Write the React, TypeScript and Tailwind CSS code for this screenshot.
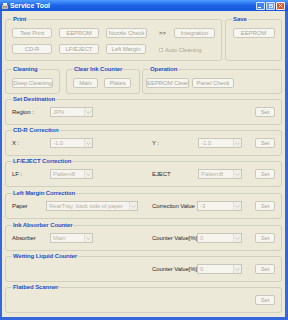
import type { ReactNode } from 'react';

function Btn({ children, className = '' }: { children: ReactNode; className?: string }) {
  return (
    <div
      className={`flex h-[10px] shrink-0 items-center justify-center whitespace-nowrap rounded-[2px] border border-[#cac8bb] bg-[#f6f5f0] text-[#aca899] ${className}`}
    >
      {children}
    </div>
  );
}

function Combo({ value, className = '' }: { value: string; className?: string }) {
  return (
    <div className={`flex h-[10px] shrink-0 items-center border border-[#c9c7ba] bg-[#f5f4ef] ${className}`}>
      <span className="flex-1 truncate whitespace-nowrap pl-[2px] text-[#b8b5a8]">{value}</span>
      <span className="flex h-full w-[8px] items-center justify-center border-l border-[#e0ded3] bg-[#efeee7]">
        <svg width="5" height="3" viewBox="0 0 5 3">
          <path d="M0.5 0.5 L2.5 2.5 L4.5 0.5" fill="none" stroke="#c2bfb2" strokeWidth="0.8" />
        </svg>
      </span>
    </div>
  );
}

function Group({ title, children, className = '' }: { title: string; children: ReactNode; className?: string }) {
  return (
    <fieldset className={`rounded-[3px] border border-[#d0d0bf] px-[6px] ${className}`}>
      <legend className="whitespace-nowrap px-[1px] text-[6px] font-bold leading-[8px] text-[#1d4fc6]">{title}</legend>
      {children}
    </fieldset>
  );
}

function Label({ children, className = '' }: { children: ReactNode; className?: string }) {
  return <span className={`shrink-0 whitespace-nowrap text-[#2b2b2b] ${className}`}>{children}</span>;
}

export default function App() {
  return (
    <div className='flex h-[320px] w-[288px] flex-col overflow-hidden font-["Liberation_Sans",Arial,sans-serif] text-[6px] leading-[8px] tracking-[-0.1px]'>
      {/* title bar */}
      <div className="flex h-[11px] shrink-0 items-center bg-gradient-to-b from-[#4f9bff] via-[#1c63e6] to-[#1658dc] pl-[1px] pr-[3px]">
        <svg width="8" height="8" viewBox="0 0 8 8" className="mr-[1px]">
          <rect x="1" y="3" width="6" height="4" fill="#d9d4c4" stroke="#7a6f5a" strokeWidth="0.5" />
          <rect x="2" y="1" width="4" height="2.5" fill="#f3f1e8" />
          <rect x="2" y="4" width="1.5" height="1.5" fill="#3aa33a" />
          <rect x="4" y="4.5" width="2" height="1" fill="#d83b2a" />
        </svg>
        <span className="text-[7px] font-bold text-white">Service Tool</span>
        <div className="ml-auto flex gap-[1px]">
          <div className="flex h-[8px] w-[9px] items-end justify-start rounded-[1px] border border-white/80 bg-[#3f84f0] pb-[1px] pl-[1px]">
            <div className="h-[1px] w-[3px] bg-white" />
          </div>
          <div className="flex h-[8px] w-[9px] items-center justify-center rounded-[1px] border border-white/70 bg-[#6a9ef0]">
            <div className="h-[4px] w-[4px] border border-t-2 border-white/70" />
          </div>
          <div className="flex h-[8px] w-[9px] items-center justify-center rounded-[1px] border border-white/90 bg-[#e2542c]">
            <svg width="5" height="5" viewBox="0 0 5 5">
              <path d="M0.7 0.7 L4.3 4.3 M4.3 0.7 L0.7 4.3" stroke="white" strokeWidth="1" />
            </svg>
          </div>
        </div>
      </div>

      {/* window body */}
      <div className="flex flex-1 flex-col border-b-[3px] border-l-[2px] border-r-[3px] border-[#3467dc] bg-[#ece9d8] px-[3px] pt-[4px]">
        <div className="flex gap-[3px]">
          <Group title="Print" className="w-[217px] pb-[6px] pt-[5px]">
            <div className="flex items-center">
              <Btn className="w-[40px]">Test Print</Btn>
              <Btn className="ml-[7px] w-[40px]">EEPROM</Btn>
              <Btn className="ml-[7px] w-[41px]">Nozzle Check</Btn>
              <span className="ml-[12px] text-[#333]">&gt;&gt;</span>
              <Btn className="ml-[8px] w-[41px]">Integration</Btn>
            </div>
            <div className="mt-[5px] flex items-center">
              <Btn className="w-[40px]">CD-R</Btn>
              <Btn className="ml-[7px] w-[40px]">LF/EJECT</Btn>
              <Btn className="ml-[7px] w-[40px]">Left Margin</Btn>
              <div className="ml-[13px] mt-[3px] flex items-center gap-[2px]">
                <div className="h-[4px] w-[4px] border border-[#c9c7ba] bg-[#f5f4ef]" />
                <span className="whitespace-nowrap text-[#aca899]">Auto Cleaning</span>
              </div>
            </div>
          </Group>
          <Group title="Save" className="flex-1 pt-[5px]">
            <div className="flex justify-center">
              <Btn className="w-[42px]">EEPROM</Btn>
            </div>
          </Group>
        </div>

        <div className="mt-[4px] flex">
          <Group title="Cleaning" className="w-[52px] pb-[5px] pt-[5px]">
            <Btn className="w-[41px]">Deep Cleaning</Btn>
          </Group>
          <Group title="Clear Ink Counter" className="ml-[6px] w-[74px] pb-[5px] pt-[5px]">
            <div className="flex gap-[6px]">
              <Btn className="w-[25px]">Main</Btn>
              <Btn className="w-[27px]">Plates</Btn>
            </div>
          </Group>
          <Group title="Operation" className="ml-[2px] flex-1 pb-[5px] pt-[5px]">
            <div className="-ml-[3px] flex gap-[3px]">
              <Btn className="w-[43px]">EEPROM Clear</Btn>
              <Btn className="w-[42px]">Panel Check</Btn>
            </div>
          </Group>
        </div>

        <Group title="Set Destination" className="mt-[1px] pb-[7px] pt-[4px]">
          <div className="flex items-center">
            <Label className="w-[38px]">Region :</Label>
            <Combo value="JPN" className="w-[43px]" />
            <Btn className="ml-auto w-[20px]">Set</Btn>
          </div>
        </Group>

        <Group title="CD-R Correction" className="mt-[1px] pb-[7px] pt-[4px]">
          <div className="flex items-center">
            <Label className="w-[38px]">X :</Label>
            <Combo value="-1.0" className="w-[43px]" />
            <Label className="ml-[59px] w-[46px]">Y :</Label>
            <Combo value="-1.0" className="w-[44px]" />
            <Btn className="ml-auto w-[20px]">Set</Btn>
          </div>
        </Group>

        <Group title="LF/EJECT Correction" className="mt-[1px] pb-[7px] pt-[4px]">
          <div className="flex items-center">
            <Label className="w-[38px]">LF :</Label>
            <Combo value="Pattern8" className="w-[43px]" />
            <Label className="ml-[59px] w-[46px]">EJECT</Label>
            <Combo value="Pattern8" className="w-[44px]" />
            <Btn className="ml-auto w-[20px]">Set</Btn>
          </div>
        </Group>

        <Group title="Left Margin Correction" className="mt-[2px] pb-[7px] pt-[4px]">
          <div className="flex items-center">
            <Label className="w-[34px]">Paper</Label>
            <Combo value="RearTray, back side of paper" className="w-[92px]" />
            <Label className="ml-[14px] w-[45px]">Correction Value</Label>
            <Combo value="-3" className="w-[45px]" />
            <Btn className="ml-auto w-[20px]">Set</Btn>
          </div>
        </Group>

        <Group title="Ink Absorber Counter" className="mt-[2px] pb-[7px] pt-[4px]">
          <div className="flex items-center">
            <Label className="w-[38px]">Absorber</Label>
            <Combo value="Main" className="w-[43px]" />
            <Label className="ml-[59px] w-[45px]">Counter Value[%]</Label>
            <Combo value="0" className="w-[45px]" />
            <Btn className="ml-auto w-[20px]">Set</Btn>
          </div>
        </Group>

        <Group title="Wetting Liquid Counter" className="mt-[1px] pb-[7px] pt-[4px]">
          <div className="flex items-center">
            <Label className="ml-[140px] w-[45px]">Counter Value[%]</Label>
            <Combo value="0" className="w-[45px]" />
            <Btn className="ml-auto w-[20px]">Set</Btn>
          </div>
        </Group>

        <Group title="Flatbed Scanner" className="mt-[1px] pb-[7px] pt-[4px]">
          <div className="flex items-center">
            <Btn className="ml-auto w-[20px]">Set</Btn>
          </div>
        </Group>
      </div>
    </div>
  );
}
